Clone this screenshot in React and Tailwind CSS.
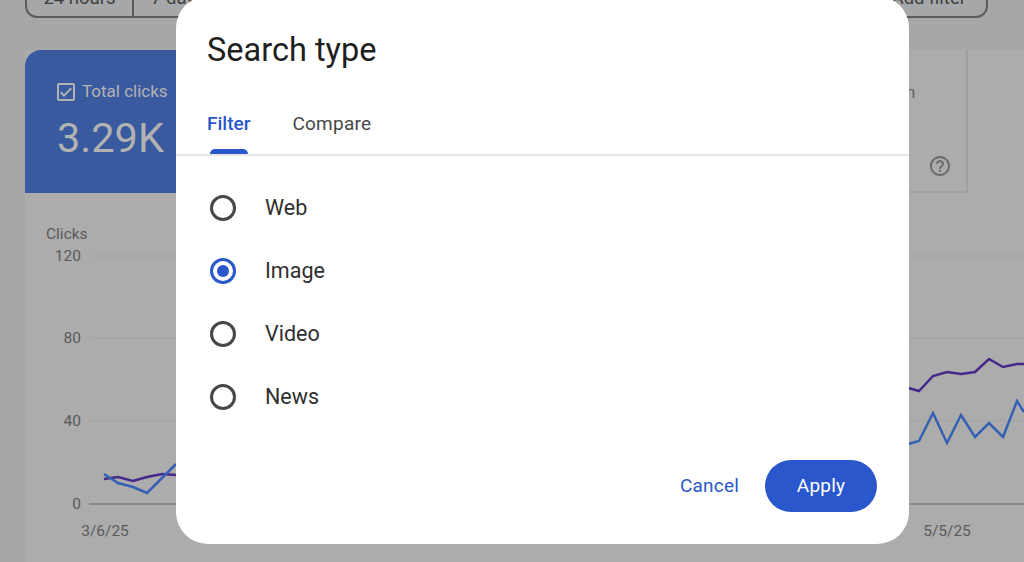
import React from 'react';
import { MdOutlineCheckBox, MdHelpOutline } from 'react-icons/md';

const purpleLeft = '104,479 118,477 133,481 147,477 162,474 176,475';
const blueLeft = '104,474 118,483 133,487 147,493 176,464';
const purpleRight = '905,387 919,391 933,376 947,372 961,374 975,372 989,359 1003,367 1017,364 1024,364';
const blueRight = '905,445 919,441 933,413 947,443 961,415 975,437 989,423 1003,437 1017,401 1024,412';

const Chart = () => (
  <svg width="999" height="369" viewBox="25 193 999 369" className="block" fontFamily="Roboto, sans-serif" fontSize="15.5" fill="#5a5a5a">
    <text x="46" y="239">Clicks</text>
    {[['120', 256], ['80', 338], ['40', 421]].map(([label, y]) => (
      <g key={label}>
        <text x="81" y={y + 5} textAnchor="end">{label}</text>
        <line x1="89" x2="1024" y1={y} y2={y} stroke="#a2a2a2" strokeWidth="1" />
      </g>
    ))}
    <text x="81" y="509" textAnchor="end">0</text>
    <line x1="89" x2="1024" y1="504" y2="504" stroke="#6a6a6a" strokeWidth="1" />
    <text x="105" y="536" textAnchor="middle">3/6/25</text>
    <text x="947" y="536" textAnchor="middle">5/5/25</text>
    <polyline points={purpleLeft} fill="none" stroke="#46288a" strokeWidth="2.5" />
    <polyline points={blueLeft} fill="none" stroke="#3560b4" strokeWidth="2.5" />
    <polyline points={purpleRight} fill="none" stroke="#46288a" strokeWidth="2.5" />
    <polyline points={blueRight} fill="none" stroke="#3560b4" strokeWidth="2.5" />
  </svg>
);

const Radio = ({ label, checked }) => (
  <div className="flex h-[63px] items-center">
    <span className={`flex h-[26px] w-[26px] items-center justify-center rounded-full border-[3px] ${checked ? 'border-[#2a58cc]' : 'border-[#474747]'}`}>
      {checked && <span className="h-[12px] w-[12px] rounded-full bg-[#2a58cc]" />}
    </span>
    <span className="ml-[29px] pt-[2px] text-[21.5px] text-[#2f2f2f]">{label}</span>
  </div>
);

const SearchTypeDialog = () => (
  <div className="absolute left-[176px] top-[-4px] flex h-[548px] w-[733px] flex-col rounded-[32px] bg-white">
    <h2 className="pl-[31px] pt-[32px] text-[32.5px] leading-[44px] text-[#1f1f1f]">Search type</h2>
    <div className="mt-[21px] flex h-[63px] border-b-2 border-[#e6e6e6] pl-[31px] text-[19px] font-medium">
      <div className="relative pt-[17px] text-[#2a58cc]">
        Filter
        <span className="absolute bottom-0 left-[3px] h-[5px] w-[38px] rounded-t-[5px] bg-[#2a58cc]" />
      </div>
      <div className="ml-[42px] pt-[17px] font-normal tracking-[0.25px] text-[#474747]">Compare</div>
    </div>
    <div className="flex flex-col pl-[34px] pt-[20px]">
      <Radio label="Web" />
      <Radio label="Image" checked />
      <Radio label="Video" />
      <Radio label="News" />
    </div>
    <div className="mt-auto flex items-center justify-end gap-[26px] pb-[32px] pr-[32px]">
      <button className="text-[19px] tracking-[0.2px] text-[#2a58cc]">Cancel</button>
      <button className="h-[52px] w-[112px] rounded-full bg-[#2a58cc] text-[19px] tracking-[0.2px] text-white">Apply</button>
    </div>
  </div>
);

export default function App() {
  return (
    <div className="relative h-[562px] w-[1024px] overflow-hidden bg-[#a6a7a9] font-['Roboto',sans-serif]">
      <div className="ml-[25px] mr-[36px] mt-[-30px] flex h-[48px] items-end rounded-b-[12px] border-2 border-[#5c5c5c] text-[18.5px] leading-[21px] text-[#3f3f3f]">
        <div className="flex h-full w-[107px] items-end justify-center border-r-2 border-[#5c5c5c] pb-[7px]">24 hours</div>
        <div className="pb-[7px] pl-[17px]">7 days</div>
        <div className="ml-auto pb-[7px] pr-[20px]">Add filter</div>
      </div>

      <div className="ml-[25px] mt-[32px] bg-[#acacac]">
        <div className="grid h-[143px] w-[943px] grid-cols-4">
          <div className="rounded-tl-[16px] bg-[#3a5aa0] pl-[32px] pt-[29px] text-[#b2b2b2]">
            <div className="flex items-center gap-[4px] text-[17px]">
              <MdOutlineCheckBox size={24} className="ml-[-3px]" />
              Total clicks
            </div>
            <div className="mt-[8px] text-[41.5px] leading-[50px]">3.29K</div>
          </div>
          <div className="border-b-2 border-[#a0a0a0]" />
          <div className="border-b-2 border-[#a0a0a0]" />
          <div className="relative border-b-2 border-r-2 border-[#a0a0a0] pl-[57px] pt-[30px] text-[17px] text-[#5f5f5f]">
            Average position
            <MdHelpOutline size={24} className="absolute bottom-[13px] right-[14px] text-[#6a6a6a]" />
          </div>
        </div>
        <Chart />
      </div>

      <SearchTypeDialog />
    </div>
  );
}
